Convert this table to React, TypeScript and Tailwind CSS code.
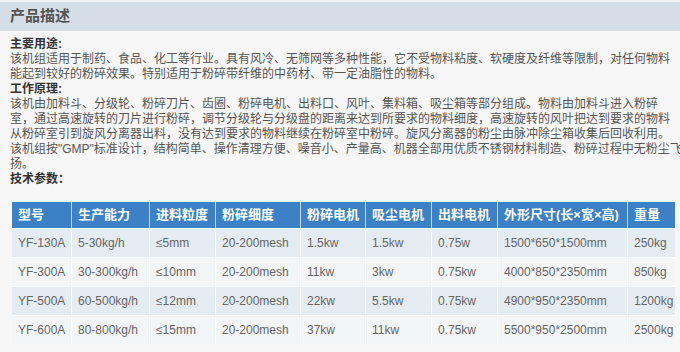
const rows = [
  ["YF-130A", "5-30kg/h", "≤5mm", "20-200mesh", "1.5kw", "1.5kw", "0.75w", "1500*650*1500mm", "250kg"],
  ["YF-300A", "30-300kg/h", "≤10mm", "20-200mesh", "11kw", "3kw", "0.75kw", "4000*850*2350mm", "850kg"],
  ["YF-500A", "60-500kg/h", "≤12mm", "20-200mesh", "22kw", "5.5kw", "0.75kw", "4900*950*2350mm", "1200kg"],
  ["YF-600A", "80-800kg/h", "≤15mm", "20-200mesh", "37kw", "11kw", "0.75kw", "5500*950*2500mm", "2500kg"],
];

const heads = ["型号", "生产能力", "进料粒度", "粉碎细度", "粉碎电机", "吸尘电机", "出料电机", "外形尺寸(长×宽×高)", "重量"];
const widths = ["w-[59px]", "w-[78px]", "w-[66px]", "w-[85px]", "w-[65px]", "w-[66px]", "w-[66px]", "w-[130px]", "w-[48px]"];

export default function App() {
  return (
    <div className="h-[352px] w-[680px] overflow-hidden bg-[#f7f7f7] font-['Liberation_Sans','Noto_Sans_CJK_SC',sans-serif] text-[12px] text-[#555]">
      <div className="h-[2px] bg-[#eef1f4]" />
      <div className="flex h-[29px] items-center bg-[#d5dee6] pl-[10px] text-[15px] font-bold text-[#555]">产品描述</div>

      <div className="whitespace-nowrap px-[10px] pt-[6px] leading-[15px]">
        <div className="font-bold text-[#333]">主要用途:</div>
        <div>
          该机组适用于制药、食品、化工等行业。具有风冷、无筛网等多种性能，它不受物料粘度、软硬度及纤维等限制，对任何物料
          <br />
          能起到较好的粉碎效果。特别适用于粉碎带纤维的中药材、带一定油脂性的物料。
        </div>
        <div className="font-bold text-[#333]">工作原理:</div>
        <div>
          该机由加料斗、分级轮、粉碎刀片、齿圈、粉碎电机、出料口、风叶、集料箱、吸尘箱等部分组成。物料由加料斗进入粉碎
          <br />
          室，通过高速旋转的刀片进行粉碎，调节分级轮与分级盘的距离来达到所要求的物料细度，高速旋转的风叶把达到要求的物料
          <br />
          从粉碎室引到旋风分离器出料，没有达到要求的物料继续在粉碎室中粉碎。旋风分离器的粉尘由脉冲除尘箱收集后回收利用。
        </div>
        <div>
          该机组按"GMP"标准设计，结构简单、操作清理方便、噪音小、产量高、机器全部用优质不锈钢材料制造、粉碎过程中无粉尘飞
          <br />
          扬。
        </div>
        <div className="font-bold text-[#333]">技术参数：</div>
      </div>

      <div className="ml-[12px] mt-[15px] w-[663px] text-[12px]">
        <div className="flex h-[26px] bg-[#3c81c6] text-[13px] font-bold text-white">
          {heads.map((h, i) => (
            <div key={h} className={`${widths[i]} flex items-center border-l border-white/70 pl-[6px] first:border-l-0`}>
              {h}
            </div>
          ))}
        </div>
        {rows.map((r, ri) => (
          <div
            key={r[0]}
            className={`flex h-[29px] border-t border-white text-[#666] ${ri % 2 === 0 ? "bg-[#e4ecf2]" : "bg-[#f3f5f7]"}`}
          >
            {r.map((c, i) => (
              <div key={i} className={`${widths[i]} flex items-center border-l border-white pl-[6px] first:border-l-0`}>
                {c}
              </div>
            ))}
          </div>
        ))}
      </div>
    </div>
  );
}
